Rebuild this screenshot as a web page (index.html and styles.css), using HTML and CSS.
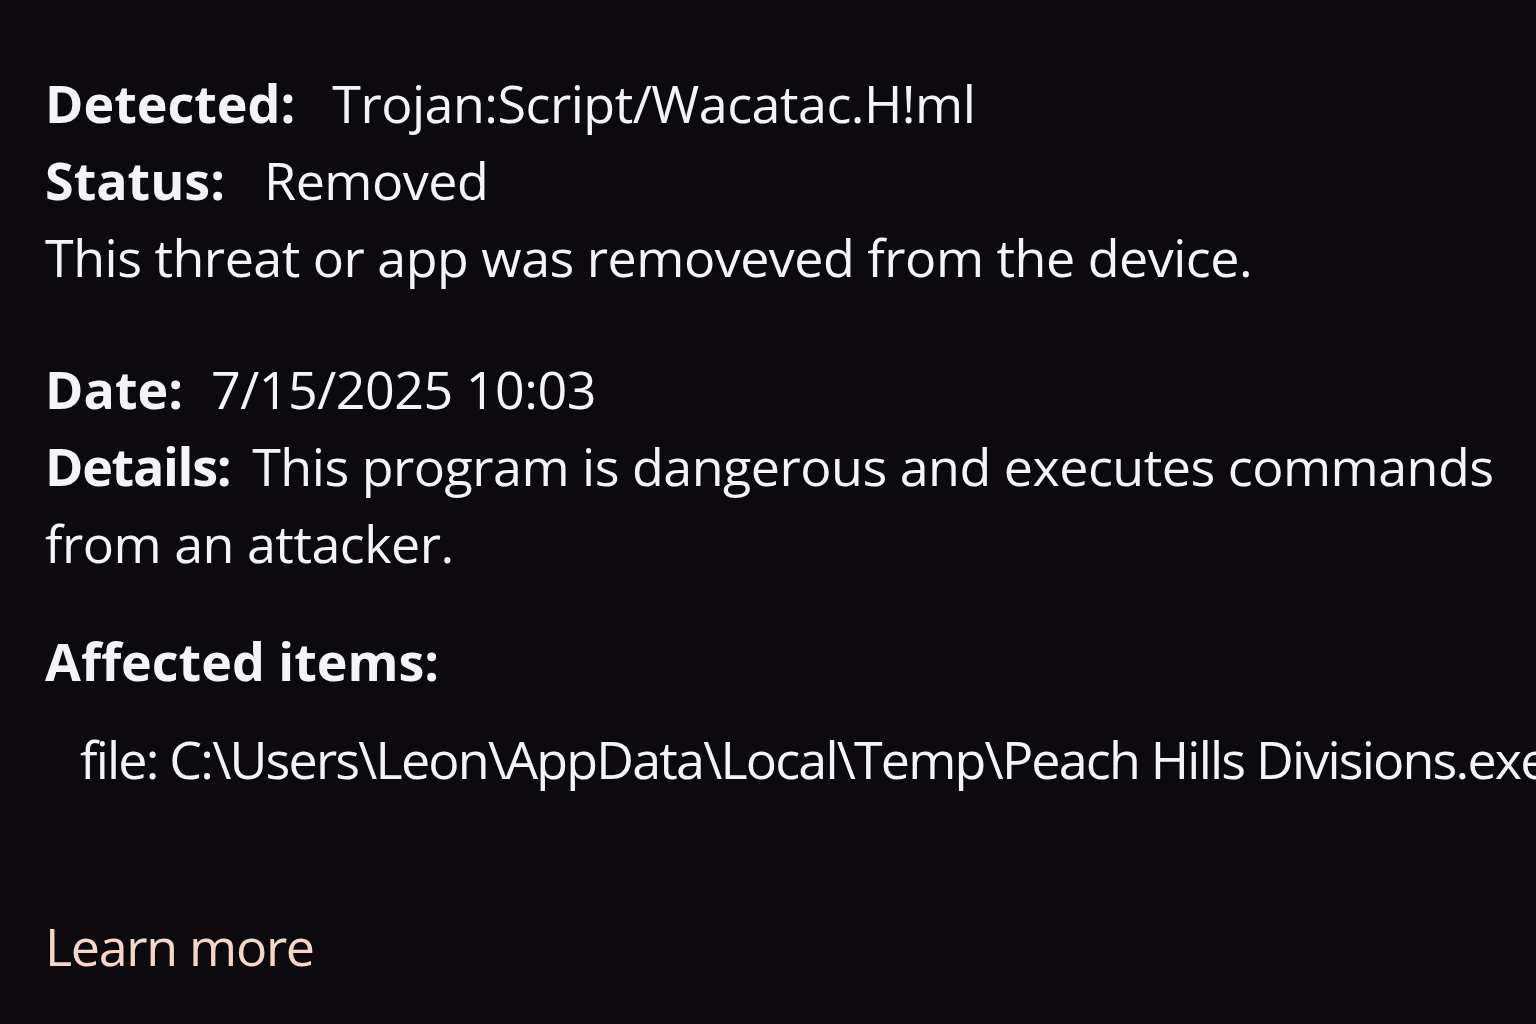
FILE: index.html
```html
<!DOCTYPE html>
<html lang="en">
<head>
<meta charset="utf-8">
<title>Threat details</title>
<link rel="stylesheet" href="styles.css">
</head>
<body>
<main class="panel">
  <section class="group">
    <p class="row"><span class="label label-detected">Detected:</span>Trojan:Script/Wacatac.H!ml</p>
    <p class="row"><span class="label label-status">Status:</span>Removed</p>
    <p class="row">This threat or app was removeved from the device.</p>
  </section>
  <section class="group group-date">
    <p class="row"><span class="label label-date">Date:</span>7/15/2025 10:03</p>
    <p class="row details"><span class="label label-details">Details:</span>This program is dangerous and executes commands from an attacker.</p>
  </section>
  <section class="group group-affected">
    <h2 class="heading">Affected items:</h2>
    <p class="row file">file: C:\Users\Leon\AppData\Local\Temp\Peach Hills Divisions.exe</p>
  </section>
  <a class="learn" href="#">Learn more</a>
</main>
</body>
</html>
```
FILE: styles.css
```css
html, body {
  margin: 0;
  padding: 0;
  background: #0c0a0e;
  overflow: hidden;
}
body {
  width: 1536px;
  height: 1024px;
  font-family: "Open Sans", "Noto Sans", sans-serif;
  color: #f4f3f5;
}
.panel {
  padding: 64px 0 0 45px;
  font-size: 52px;
  line-height: 77px;
  letter-spacing: -0.5px;
}
.row {
  margin: 0;
  white-space: nowrap;
}
.details {
  white-space: normal;
  width: 1475px;
}
.label {
  font-weight: 700;
  letter-spacing: 0;
}
.label-detected { margin-right: 37px; }
.label-status { margin-right: 39px; }
.label-date { margin-right: 28px; }
.label-details {
  margin-right: 22px;
  letter-spacing: -1.3px;
}
.group-date { margin-top: 55px; }
.group-affected { margin-top: 41px; }
.heading {
  margin: 0;
  font-size: 52px;
  font-weight: 700;
  line-height: 77px;
  letter-spacing: 0;
}
.file {
  margin-top: 21px;
  padding-left: 35px;
  letter-spacing: -1.8px;
}
.learn {
  display: block;
  margin-top: 110px;
  color: #f8d4c9;
  text-decoration: none;
  letter-spacing: -1.3px;
}
```
